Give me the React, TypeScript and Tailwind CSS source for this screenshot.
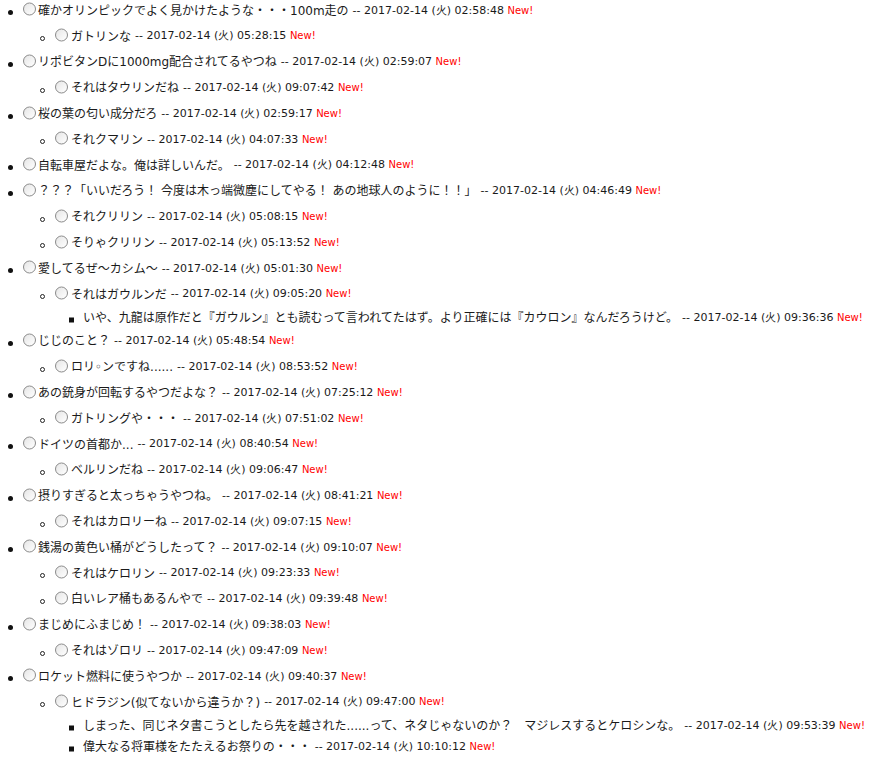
import React from "react";

type Post = {
  text: string;
  time: string;
  replies?: Post[];
};

const DATE = "2017-02-14";

const THREAD: Post[] = [
  {
    text: "確かオリンピックでよく見かけたような・・・100m走の",
    time: "02:58:48",
    replies: [{ text: "ガトリンな", time: "05:28:15" }],
  },
  {
    text: "リポビタンDに1000mg配合されてるやつね",
    time: "02:59:07",
    replies: [{ text: "それはタウリンだね", time: "09:07:42" }],
  },
  {
    text: "桜の葉の匂い成分だろ",
    time: "02:59:17",
    replies: [{ text: "それクマリン", time: "04:07:33" }],
  },
  { text: "自転車屋だよな。俺は詳しいんだ。", time: "04:12:48" },
  {
    text: "？？？「いいだろう！ 今度は木っ端微塵にしてやる！ あの地球人のように！！」",
    time: "04:46:49",
    replies: [
      { text: "それクリリン", time: "05:08:15" },
      { text: "そりゃクリリン", time: "05:13:52" },
    ],
  },
  {
    text: "愛してるぜ〜カシム〜",
    time: "05:01:30",
    replies: [
      {
        text: "それはガウルンだ",
        time: "09:05:20",
        replies: [
          {
            text: "いや、九龍は原作だと『ガウルン』とも読むって言われてたはず。より正確には『カウロン』なんだろうけど。",
            time: "09:36:36",
          },
        ],
      },
    ],
  },
  {
    text: "じじのこと？",
    time: "05:48:54",
    replies: [{ text: "ロリ◦ンですね......", time: "08:53:52" }],
  },
  {
    text: "あの銃身が回転するやつだよな？",
    time: "07:25:12",
    replies: [{ text: "ガトリングや・・・", time: "07:51:02" }],
  },
  {
    text: "ドイツの首都か...",
    time: "08:40:54",
    replies: [{ text: "ベルリンだね", time: "09:06:47" }],
  },
  {
    text: "摂りすぎると太っちゃうやつね。",
    time: "08:41:21",
    replies: [{ text: "それはカロリーね", time: "09:07:15" }],
  },
  {
    text: "銭湯の黄色い桶がどうしたって？",
    time: "09:10:07",
    replies: [
      { text: "それはケロリン", time: "09:23:33" },
      { text: "白いレア桶もあるんやで", time: "09:39:48" },
    ],
  },
  {
    text: "まじめにふまじめ！",
    time: "09:38:03",
    replies: [{ text: "それはゾロリ", time: "09:47:09" }],
  },
  {
    text: "ロケット燃料に使うやつか",
    time: "09:40:37",
    replies: [
      {
        text: "ヒドラジン(似てないから違うか？)",
        time: "09:47:00",
        replies: [
          {
            text: "しまった、同じネタ書こうとしたら先を越された......って、ネタじゃないのか？　マジレスするとケロシンな。",
            time: "09:53:39",
          },
          { text: "偉大なる将軍様をたたえるお祭りの・・・", time: "10:10:12" },
        ],
      },
    ],
  },
];

function Radio() {
  return (
    <span className="inline-block size-[13px] shrink-0 -translate-y-[1.5px] rounded-full border border-[#8a8a8a] bg-gradient-to-br from-[#e6e6e6] to-white" />
  );
}

function Stamp({ time }: { time: string }) {
  return (
    <span className="ml-[4px] whitespace-nowrap font-['DejaVu_Sans',Verdana,sans-serif] text-[11px] text-[#1a1a1a]">
      -- {DATE} (火) {time}{" "}
      <span className="text-[10px] text-[#ff0000]">New!</span>
    </span>
  );
}

function Row({ post, depth }: { post: Post; depth: number }) {
  if (depth === 0) {
    return (
      <div className="flex h-[25.8px] items-center pl-[8px]">
        <span className="size-[5px] shrink-0 translate-y-[2px] rounded-full bg-[#111]" />
        <span className="ml-[10px] flex">
          <Radio />
        </span>
        <span className="ml-[2px] whitespace-nowrap">{post.text}</span>
        <Stamp time={post.time} />
      </div>
    );
  }
  if (depth === 1) {
    return (
      <div className="flex h-[25.8px] items-center pl-[40px]">
        <span className="size-[5px] shrink-0 translate-y-[2px] rounded-full border border-[#222]" />
        <span className="ml-[10px] flex">
          <Radio />
        </span>
        <span className="ml-[3px] whitespace-nowrap">{post.text}</span>
        <Stamp time={post.time} />
      </div>
    );
  }
  return (
    <div className="flex h-[21px] items-center pl-[69px]">
      <span className="size-[5px] shrink-0 translate-y-[1.5px] bg-[#111]" />
      <span className="ml-[9px] whitespace-nowrap">{post.text}</span>
      <Stamp time={post.time} />
    </div>
  );
}

function Branch({ posts, depth }: { posts: Post[]; depth: number }) {
  return (
    <ul className="m-0 list-none p-0">
      {posts.map((post, i) => (
        <li key={depth + "-" + i}>
          <Row post={post} depth={depth} />
          {post.replies ? (
            <Branch posts={post.replies} depth={depth + 1} />
          ) : null}
        </li>
      ))}
    </ul>
  );
}

export default function App() {
  return (
    <div className="min-h-screen bg-white font-['DejaVu_Sans','Noto_Sans_CJK_JP',sans-serif] text-[12px] text-[#1a1a1a]">
      <div className="-mt-[2px]">
        <Branch posts={THREAD} depth={0} />
      </div>
    </div>
  );
}
